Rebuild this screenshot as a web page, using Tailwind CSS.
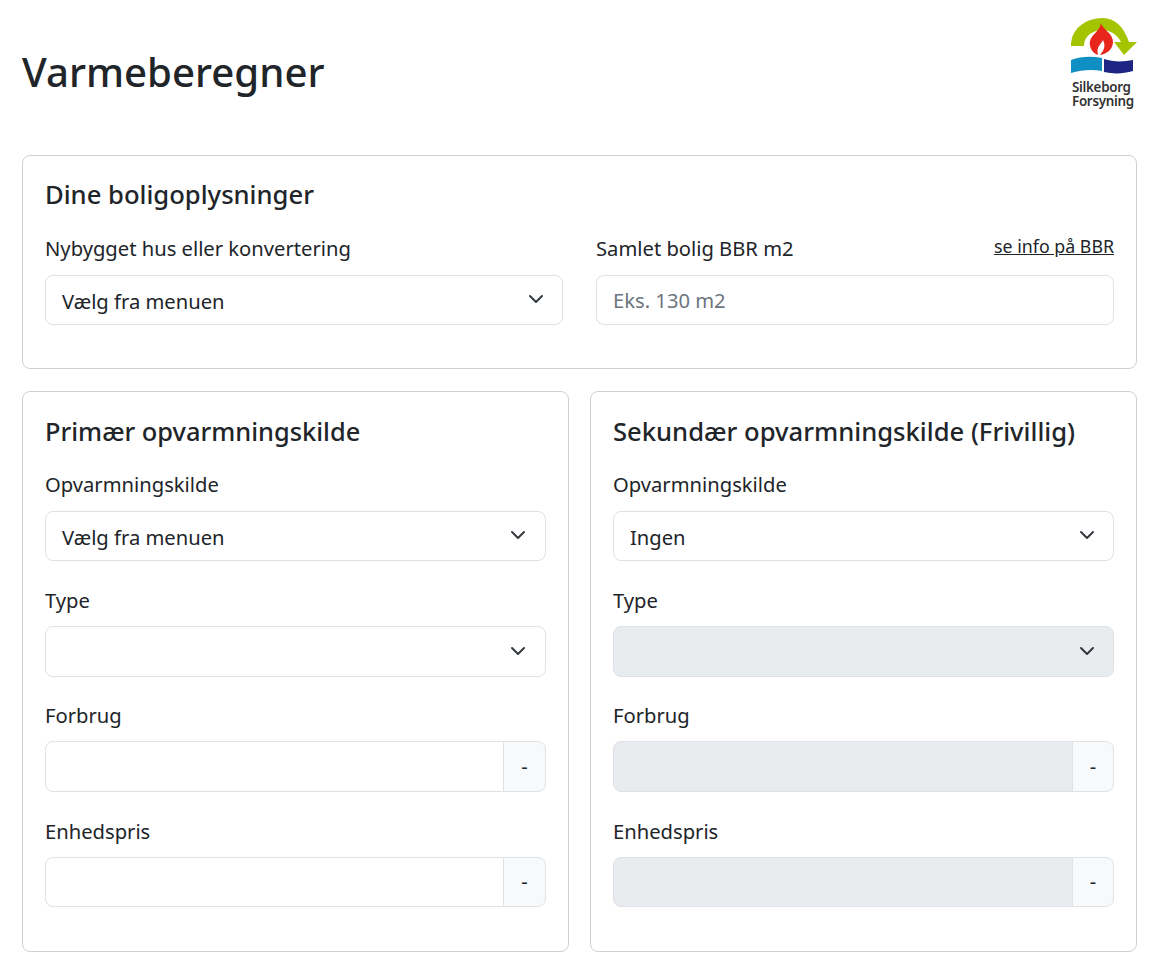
<!DOCTYPE html>
<html lang="da">
<head>
  <meta charset="UTF-8" />
  <title>Varmeberegner</title>
  <script src="https://cdn.jsdelivr.net/npm/@tailwindcss/browser@4"></script>
</head>
<body class="bg-white text-[#212529] font-['Noto_Sans',sans-serif] text-[20.2px]">
  <main class="pl-[22px] pr-[23px]">
    <header class="h-[155px] flex justify-between">
      <h1 class="mt-[43px] text-[40.2px] leading-[58px] font-medium">Varmeberegner</h1>
      <div class="pt-[18px] w-[66px]">
        <svg viewBox="0 0 66 56" class="block w-[66px] h-[56px]">
          <path d="M0 28C0 11 14 0 32 0C44 0 53 9 58 24L66 24L53 37L43 24L50 24C46 16 39 12 30 12C20 13 13 19 13 28Z" fill="#a4c400"/>
          <path d="M30 5C31 11 42 15 42 24C42 31 36 36 29 37C33 32 35 28 32 22C30 26 25 29 27 37C21 35 18 29 19 23C21 16 29 13 30 5Z" fill="#e8261c"/>
          <path d="M0 42C10 38 21 38 31 40L31 53C21 51 10 52 0 55Z" fill="#0f8fc4"/>
          <path d="M33 41C42 44 52 44 62 42L62 53C52 56 42 56 33 54Z" fill="#1c2581"/>
        </svg>
        <div class="mt-[6px] ml-px text-[13.4px] leading-[14px] font-semibold text-[#333] tracking-[-0.3px]">Silkeborg<br />Forsyning</div>
      </div>
    </header>

    <section class="border border-[#d0d0d0] rounded-lg px-[22px] pt-[22px] h-[214px]">
      <h2 class="text-[25.6px] leading-[34px] font-medium mb-[22px]">Dine boligoplysninger</h2>
      <div class="grid grid-cols-2 gap-x-[33px]">
        <div>
          <label class="block leading-[28px] mb-[13px]">Nybygget hus eller konvertering</label>
          <div class="relative">
            <select class="w-full h-[50px] appearance-none bg-white border border-[#dee2e6] rounded-lg px-4 pt-[2px] outline-none">
              <option>Vælg fra menuen</option>
            </select>
            <svg viewBox="0 0 16 16" class="absolute right-[19px] top-[16px] w-4 h-4 pointer-events-none" fill="none" stroke="#343a40" stroke-width="2" stroke-linecap="round" stroke-linejoin="round"><path d="M2 5l6 6 6-6"/></svg>
          </div>
        </div>
        <div>
          <div class="flex justify-between mb-[13px]">
            <label class="leading-[28px]">Samlet bolig BBR m2</label>
            <a href="#" class="text-[17.8px] leading-[24px] underline">se info på BBR</a>
          </div>
          <input type="text" placeholder="Eks. 130 m2" class="w-full h-[50px] border border-[#dee2e6] rounded-lg px-4 outline-none placeholder:text-[#6c757d]" />
        </div>
      </div>
    </section>

    <div class="grid grid-cols-2 gap-x-[21px] mt-[22px]">
      <section class="border border-[#d0d0d0] rounded-lg px-[22px] pt-[22px] h-[561px]">
        <h2 class="text-[25.4px] leading-[34px] font-medium mb-[22px]">Primær opvarmningskilde</h2>
        <label class="block leading-[29px] mb-[12px]">Opvarmningskilde</label>
        <div class="relative mb-[25px]">
          <select class="w-full h-[50px] appearance-none bg-white border border-[#dee2e6] rounded-lg px-4 pt-[2px] outline-none">
            <option>Vælg fra menuen</option>
          </select>
          <svg viewBox="0 0 16 16" class="absolute right-[20px] top-[16px] w-4 h-4 pointer-events-none" fill="none" stroke="#343a40" stroke-width="2" stroke-linecap="round" stroke-linejoin="round"><path d="M2 5l6 6 6-6"/></svg>
        </div>
        <label class="block leading-[28px] mb-[12px]">Type</label>
        <div class="relative mb-[24px]">
          <select class="w-full h-[51px] appearance-none bg-white border border-[#dee2e6] rounded-lg px-4 outline-none"></select>
          <svg viewBox="0 0 16 16" class="absolute right-[20px] top-[17px] w-4 h-4 pointer-events-none" fill="none" stroke="#343a40" stroke-width="2" stroke-linecap="round" stroke-linejoin="round"><path d="M2 5l6 6 6-6"/></svg>
        </div>
        <label class="block leading-[28px] mb-[12px]">Forbrug</label>
        <div class="flex h-[51px] mb-[25px]">
          <input type="text" class="flex-1 min-w-0 border border-[#dee2e6] rounded-l-lg px-4 outline-none" />
          <span class="w-[43px] -ml-px flex items-center justify-center bg-[#f8f9fa] border border-[#dee2e6] rounded-r-lg text-[20px]">-</span>
        </div>
        <label class="block leading-[28px] mb-[12px]">Enhedspris</label>
        <div class="flex h-[50px]">
          <input type="text" class="flex-1 min-w-0 border border-[#dee2e6] rounded-l-lg px-4 outline-none" />
          <span class="w-[43px] -ml-px flex items-center justify-center bg-[#f8f9fa] border border-[#dee2e6] rounded-r-lg text-[20px]">-</span>
        </div>
      </section>

      <section class="border border-[#d0d0d0] rounded-lg px-[22px] pt-[22px] h-[561px]">
        <h2 class="text-[25.6px] leading-[36px] font-medium mb-[20px]">Sekundær opvarmningskilde (Frivillig)</h2>
        <label class="block leading-[29px] mb-[12px]">Opvarmningskilde</label>
        <div class="relative mb-[25px]">
          <select class="w-full h-[50px] appearance-none bg-white border border-[#dee2e6] rounded-lg px-4 pt-[2px] outline-none">
            <option>Ingen</option>
          </select>
          <svg viewBox="0 0 16 16" class="absolute right-[19px] top-[16px] w-4 h-4 pointer-events-none" fill="none" stroke="#343a40" stroke-width="2" stroke-linecap="round" stroke-linejoin="round"><path d="M2 5l6 6 6-6"/></svg>
        </div>
        <label class="block leading-[28px] mb-[12px]">Type</label>
        <div class="relative mb-[24px]">
          <select disabled class="w-full h-[51px] appearance-none bg-[#e9ecef] border border-[#dee2e6] rounded-lg px-4 outline-none"></select>
          <svg viewBox="0 0 16 16" class="absolute right-[19px] top-[17px] w-4 h-4 pointer-events-none" fill="none" stroke="#343a40" stroke-width="2" stroke-linecap="round" stroke-linejoin="round"><path d="M2 5l6 6 6-6"/></svg>
        </div>
        <label class="block leading-[28px] mb-[12px]">Forbrug</label>
        <div class="flex h-[51px] mb-[25px]">
          <input type="text" disabled class="flex-1 min-w-0 bg-[#e9ecef] border border-[#dee2e6] rounded-l-lg px-4 outline-none" />
          <span class="w-[42px] -ml-px flex items-center justify-center bg-[#f8f9fa] border border-[#dee2e6] rounded-r-lg text-[20px]">-</span>
        </div>
        <label class="block leading-[28px] mb-[12px]">Enhedspris</label>
        <div class="flex h-[50px]">
          <input type="text" disabled class="flex-1 min-w-0 bg-[#e9ecef] border border-[#dee2e6] rounded-l-lg px-4 outline-none" />
          <span class="w-[42px] -ml-px flex items-center justify-center bg-[#f8f9fa] border border-[#dee2e6] rounded-r-lg text-[20px]">-</span>
        </div>
      </section>
    </div>
  </main>
</body>
</html>
